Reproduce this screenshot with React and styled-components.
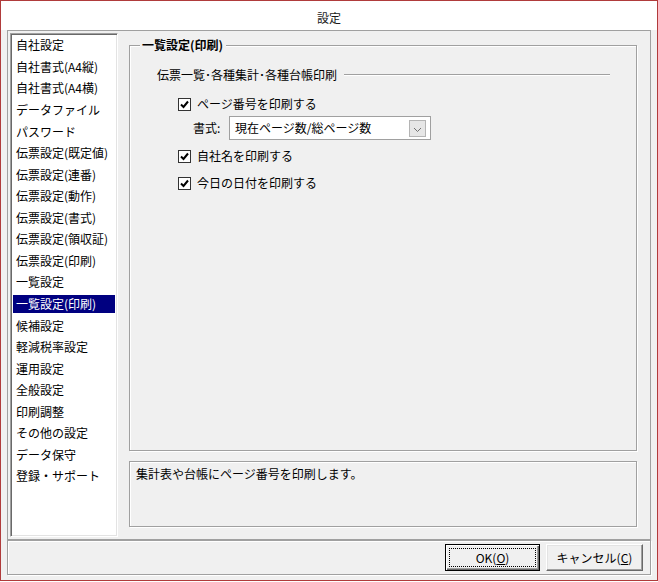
import React from "react";
import styled, { createGlobalStyle } from "styled-components";

const GlobalStyle = createGlobalStyle`
  html, body {
    margin: 0;
    padding: 0;
    background: #fff;
  }
  body {
    font-family: "Noto Sans CJK JP", "Liberation Sans", sans-serif;
    font-size: 12px;
    color: #000;
  }
  * {
    box-sizing: border-box;
  }
`;

const menuItems = [
  "自社設定",
  "自社書式(A4縦)",
  "自社書式(A4横)",
  "データファイル",
  "パスワード",
  "伝票設定(既定値)",
  "伝票設定(連番)",
  "伝票設定(動作)",
  "伝票設定(書式)",
  "伝票設定(領収証)",
  "伝票設定(印刷)",
  "一覧設定",
  "一覧設定(印刷)",
  "候補設定",
  "軽減税率設定",
  "運用設定",
  "全般設定",
  "印刷調整",
  "その他の設定",
  "データ保守",
  "登録・サポート",
];

const Window = styled.div`
  width: 658px;
  height: 581px;
  border: 1px solid #b03b3b;
  display: flex;
  flex-direction: column;
`;

const TitleBar = styled.div`
  height: 29px;
  background: #fff;
  display: flex;
  align-items: center;
  justify-content: center;
  padding-top: 4px;
  font-size: 12px;
  color: #1a1a1a;
`;

const Body = styled.div`
  flex: 1;
  background: #f0f0f0;
  padding: 0 6px 5px 6px;
  display: flex;
  flex-direction: column;
`;

const MainPanel = styled.div`
  height: 510px;
  border: 1px solid #a0a0a0;
  display: flex;
  padding: 2px 13px 2px 2px;
`;

const MenuList = styled.div`
  width: 108px;
  border: 1px solid;
  border-color: #a0a0a0 #fff #fff #a0a0a0;
  box-shadow: inset 1px 1px 0 #696969, inset -1px -1px 0 #e3e3e3;
  background: #fff;
  padding: 2.4px 2px 0 2px;
`;

const MenuItem = styled.div`
  height: 18px;
  line-height: 18px;
  margin-bottom: 3.55px;
  padding-left: 3px;
  white-space: nowrap;
  background: ${(p) => (p.$selected ? "#000080" : "transparent")};
  color: ${(p) => (p.$selected ? "#fff" : "#000")};
`;

const RightColumn = styled.div`
  flex: 1;
  margin-left: 11px;
  padding: 12px 0 10px 0;
  display: flex;
  flex-direction: column;
`;

const GroupBox = styled.div`
  flex: 1;
  border: 1px solid #a0a0a0;
  box-shadow: inset 1px 1px 0 #fff, 1px 1px 0 #fff;
  display: flex;
  flex-direction: column;
`;

const Legend = styled.div`
  width: fit-content;
  margin: -9px 0 0 10px;
  padding: 0 3px 0 2px;
  height: 16px;
  line-height: 16px;
  background: #f0f0f0;
  font-weight: bold;
`;

const SubHeading = styled.div`
  display: flex;
  align-items: center;
  margin: 14px 26px 0 27px;
  height: 16px;
  line-height: 16px;
`;

const Rule = styled.div`
  flex: 1;
  margin-left: 7px;
  border-top: 1px solid #a0a0a0;
  border-bottom: 1px solid #fff;
`;

const CheckRow = styled.label`
  display: flex;
  align-items: center;
  height: 16px;
  line-height: 16px;
  margin: ${(p) => p.$top}px 0 0 48px;
`;

const CheckBoxBox = styled.span`
  width: 13px;
  height: 13px;
  border: 1px solid #333;
  background: #fff;
  display: flex;
  align-items: center;
  justify-content: center;
  margin-right: 6px;
`;

const FormatRow = styled.div`
  display: flex;
  align-items: center;
  height: 24px;
  margin: 4px 0 0 63px;
`;

const FieldLabel = styled.span`
  width: 36px;
  line-height: 16px;
`;

const Select = styled.div`
  width: 202px;
  height: 24px;
  border: 1px solid #a0a0a0;
  background: #fff;
  display: flex;
  align-items: center;
  padding: 0 4px 0 5px;
`;

const SelectText = styled.span`
  flex: 1;
  line-height: 16px;
`;

const DropButton = styled.span`
  width: 17px;
  height: 17px;
  background: #e6e6e6;
  border: 1px solid #b4b4b4;
  display: flex;
  align-items: center;
  justify-content: center;
  padding-top: 3px;
`;

const Description = styled.div`
  height: 66px;
  margin-top: 10px;
  border: 1px solid #a0a0a0;
  box-shadow: inset 1px 1px 0 #fff, 1px 1px 0 #fff;
  padding: 4px 6px;
  line-height: 16px;
`;

const Footer = styled.div`
  height: 35px;
  border: 1px solid #a0a0a0;
  box-shadow: inset 1px 1px 0 #fff, 1px 1px 0 #fff;
  display: flex;
  justify-content: flex-end;
  gap: 6px;
  padding: 3px 7px 0 0;
`;

const Button = styled.button`
  width: ${(p) => p.$width}px;
  height: 27px;
  font: inherit;
  color: #000;
  background: #f0f0f0;
  border: 1px solid;
  border-color: ${(p) =>
    p.$default ? "#000" : "#fff #696969 #696969 #fff"};
  box-shadow: ${(p) =>
    p.$default
      ? "inset 1px 1px 0 #fff, inset -1px -1px 0 #696969, inset -2px -2px 0 #a0a0a0"
      : "inset -1px -1px 0 #a0a0a0, inset 1px 1px 0 #e3e3e3"};
  padding: ${(p) => (p.$default ? "3px" : "0")};
  display: flex;
  align-items: stretch;
  justify-content: center;
  border-radius: 0;
`;

const FocusRect = styled.span`
  flex: 1;
  border: 1px dotted #000;
  display: flex;
  align-items: center;
  justify-content: center;
`;

const Label = styled.span`
  display: flex;
  align-items: center;
  justify-content: center;
  flex: 1;
`;

const U = styled.span`
  text-decoration: underline;
`;

function CheckBox({ top, children }) {
  return (
    <CheckRow $top={top}>
      <CheckBoxBox>
        <svg width="11" height="11" viewBox="0 0 11 11">
          <path
            d="M2 5.5 L4.5 8 L9 2.5"
            fill="none"
            stroke="#000"
            strokeWidth="2"
          />
        </svg>
      </CheckBoxBox>
      {children}
    </CheckRow>
  );
}

export default function App() {
  return (
    <>
      <GlobalStyle />
      <Window>
        <TitleBar>設定</TitleBar>
        <Body>
          <MainPanel>
            <MenuList>
              {menuItems.map((item) => (
                <MenuItem key={item} $selected={item === "一覧設定(印刷)"}>
                  {item}
                </MenuItem>
              ))}
            </MenuList>
            <RightColumn>
              <GroupBox>
                <Legend>一覧設定(印刷)</Legend>
                <SubHeading>
                  伝票一覧･各種集計･各種台帳印刷
                  <Rule />
                </SubHeading>
                <CheckBox top={13}>ページ番号を印刷する</CheckBox>
                <FormatRow>
                  <FieldLabel>書式:</FieldLabel>
                  <Select>
                    <SelectText>現在ページ数/総ページ数</SelectText>
                    <DropButton>
                      <svg width="9" height="6" viewBox="0 0 9 6">
                        <path
                          d="M1 1 L4.5 4.5 L8 1"
                          fill="none"
                          stroke="#707070"
                          strokeWidth="1"
                        />
                      </svg>
                    </DropButton>
                  </Select>
                </FormatRow>
                <CheckBox top={8}>自社名を印刷する</CheckBox>
                <CheckBox top={11}>今日の日付を印刷する</CheckBox>
              </GroupBox>
              <Description>集計表や台帳にページ番号を印刷します。</Description>
            </RightColumn>
          </MainPanel>
          <Footer>
            <Button $width={95} $default>
              <FocusRect>
                OK(<U>O</U>)
              </FocusRect>
            </Button>
            <Button $width={97}>
              <Label>
                キャンセル(<U>C</U>)
              </Label>
            </Button>
          </Footer>
        </Body>
      </Window>
    </>
  );
}
